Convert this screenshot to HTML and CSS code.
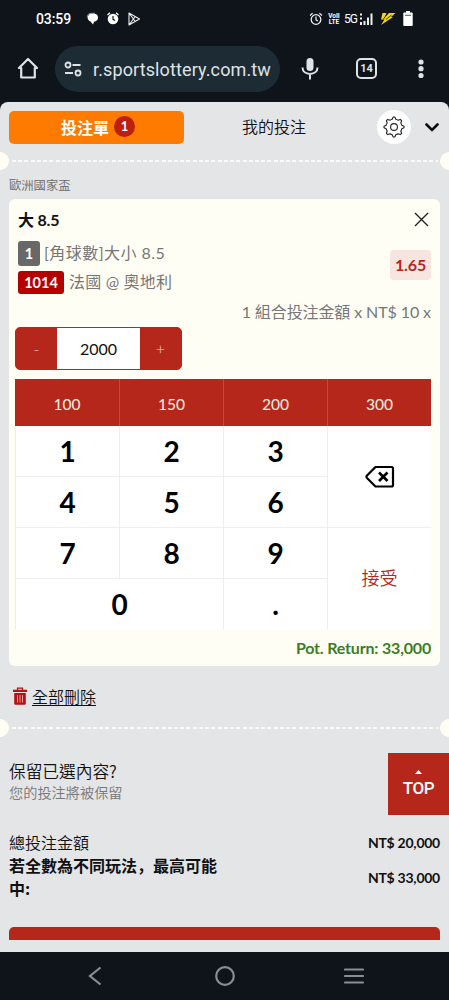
FILE: index.html
```html
<!DOCTYPE html>
<html lang="zh-Hant">
<head>
<meta charset="utf-8">
<title>投注單</title>
<link rel="stylesheet" href="styles.css">
</head>
<body>
<div class="screen">
  <header class="chrome">
    <div class="status">
      <span class="clock">03:59</span>
      <svg class="ic-left" width="56" height="16" viewBox="0 0 56 16">
        <path d="M3 3.500C5 2 10 2 11.500 4.500C13 7.500 11 10.500 8 10.800L7 13.500L4.500 10.500C2.500 10 1.500 8 1.500 6Z" fill="#fff"/>
        <path d="M1.300 6C1 3.500 3 2.300 6 2.300H9" stroke="#999" fill="none"/>
        <circle cx="27" cy="8" r="5.300" fill="#fff"/><path d="M21.500 4L24 1.800M32.500 4L30 1.800" stroke="#fff" stroke-width="1.300"/><path d="M27 5V8.300L29 9.500" stroke="#10151c" stroke-width="1.200" fill="none"/>
        <path d="M43 2V14L53.500 8ZM43 2L49 10.300M43 14L49 5.700" fill="none" stroke="#eee" stroke-width="1.100" stroke-linejoin="round"/>
      </svg>
      <span class="grow"></span>
      <svg class="ic-alarm" width="14" height="14" viewBox="0 0 14 14"><circle cx="7" cy="7.500" r="4.800" fill="none" stroke="#eee" stroke-width="1.300"/><path d="M1 3.500L3.600 1.300M13 3.500L10.400 1.300M7 4.500V7.800L9 9" fill="none" stroke="#eee" stroke-width="1.200"/></svg>
      <span class="volte"><span>VoII</span><span>LTE</span></span>
      <span class="fiveg">5G</span>
      <svg class="ic-signal" width="15" height="14" viewBox="0 0 15 14" fill="#eee"><path d="M1 1.500h2v2H1zM1 5.500h2v2H1zM1 10h2v3H1zM4.500 9h2v4h-2zM8 5.500h2V13H8zM11.500 1.500h2V13h-2z"/></svg>
      <svg class="ic-bolt" width="16" height="14" viewBox="0 0 16 14"><path d="M2.500 1H6.500L4.500 5.500L9 1H15.500L11 5H13L1 13L4.500 7.500H1Z" fill="#f3d51c"/><path d="M7.500 1.500L3.500 7M11.500 3L6 7.500" stroke="#10151c" stroke-width=".8"/></svg>
      <svg class="ic-batt" width="10" height="15" viewBox="0 0 10 15"><path d="M3 0H7V1.500H9Q9.700 1.500 9.700 2.300V14Q9.700 15 9 15H1Q.3 15 .3 14V2.300Q.3 1.500 1 1.500H3Z" fill="#fff"/><path d="M2 4.300H8" stroke="#555" stroke-width="1"/></svg>
    </div>
    <div class="toolbar">
      <svg class="ic-home" width="22" height="23" viewBox="0 0 22 23"><path d="M11 2L2 11H4.200V20.500H17.800V11H20Z" fill="none" stroke="#dfe3e6" stroke-width="2.200" stroke-linejoin="round"/></svg>
      <div class="url">
        <svg width="18" height="16" viewBox="0 0 18 16" fill="none" stroke="#dfe3e6" stroke-width="1.800"><circle cx="4" cy="4" r="2.500"/><path d="M8.500 4H16.500M1 12H9"/><circle cx="14" cy="12" r="2.500"/></svg>
        <span>r.sportslottery.com.tw</span>
      </div>
      <svg class="ic-mic" width="18" height="24" viewBox="0 0 18 24"><rect x="5.500" y="1" width="7" height="13" rx="3.500" fill="#dfe3e6"/><path d="M1.500 10.500C1.500 19 16.500 19 16.500 10.500M9 17V22.500" fill="none" stroke="#dfe3e6" stroke-width="2"/></svg>
      <div class="tabcount">14</div>
      <svg class="ic-more" width="6" height="20" viewBox="0 0 6 20" fill="#dfe3e6"><circle cx="3" cy="3" r="2.600"/><circle cx="3" cy="9.700" r="2.600"/><circle cx="3" cy="16.500" r="2.600"/></svg>
    </div>
  </header>

  <main class="page">
    <div class="tabs">
      <div class="tab-on">投注單<span class="count">1</span></div>
      <div class="tab">我的投注</div>
      <div class="gear">
        <svg width="22" height="22" viewBox="0 0 22 22" fill="none" stroke="#222" stroke-width="1.100" stroke-linejoin="round"><path d="M9.200 3.200L10.200 1H11.800L12.800 3.200Q14 3.500 15 4.200L17.300 3.400L18.600 4.700L17.800 7Q18.500 8 18.800 9.200L21 10.200V11.800L18.800 12.800Q18.500 14 17.800 15L18.600 17.300L17.300 18.600L15 17.800Q14 18.500 12.800 18.800L11.800 21H10.200L9.200 18.800Q8 18.500 7 17.800L4.700 18.600L3.400 17.300L4.200 15Q3.500 14 3.200 12.800L1 11.800V10.200L3.200 9.200Q3.500 8 4.200 7L3.400 4.700L4.700 3.400L7 4.200Q8 3.500 9.200 3.200Z"/><circle cx="11" cy="11" r="3.400"/></svg>
      </div>
      <svg class="chev" width="14" height="9" viewBox="0 0 14 9"><path d="M1.500 1.500L7 7L12.500 1.500" fill="none" stroke="#111" stroke-width="2.600" stroke-linecap="round"/></svg>
    </div>
    <div class="tear"></div>
    <div class="league">歐洲國家盃</div>

    <section class="card">
      <div class="card-head">
        <span>大 8.5</span>
        <svg width="15" height="15" viewBox="0 0 15 15"><path d="M1 1L14 14M14 1L1 14" stroke="#222" stroke-width="1.400"/></svg>
      </div>
      <div class="info">
        <div class="lines">
          <div class="line"><span class="chip gray">1</span><span class="market">[角球數]大小 8.5</span></div>
          <div class="line"><span class="chip red">1014</span><span class="match">法國 @ 奧地利</span></div>
        </div>
        <span class="odds">1.65</span>
      </div>
      <div class="combo">1 組合投注金額 x NT$ 10 x</div>
      <div class="stepper"><span class="step">-</span><span class="amount">2000</span><span class="step">+</span></div>
      <div class="quick"><span>100</span><span>150</span><span>200</span><span>300</span></div>
      <div class="keys">
        <span>1</span><span>2</span><span>3</span>
        <span class="back"><svg width="30" height="24" viewBox="0 0 30 24"><path d="M10.500 2H26.500Q28 2 28 3.500V20Q28 21.500 26.500 21.500H10.500L2 13Q1 11.800 2 10.500Z" fill="none" stroke="#000" stroke-width="2.200" stroke-linejoin="round"/><path d="M14 7.500L22.500 16M22.500 7.500L14 16" stroke="#000" stroke-width="2.600"/></svg></span>
        <span>4</span><span>5</span><span>6</span>
        <span>7</span><span>8</span><span>9</span>
        <span class="accept">接受</span>
        <span class="zero">0</span><span>.</span>
      </div>
      <div class="return">Pot. Return: 33,000</div>
    </section>

    <div class="clear">
      <svg width="14" height="18" viewBox="0 0 14 18"><path d="M4.500 3V1.200H9.500V3" fill="none" stroke="#a51616" stroke-width="1.200"/><path d="M0 2.800H14V5H0ZM1.200 6H12.800V16.500Q12.800 17.700 11.500 17.700H2.500Q1.200 17.700 1.200 16.500Z" fill="#b51212"/><path d="M4.500 8V15.500M7 8V15.500M9.500 8V15.500" stroke="#e5a5a4" stroke-width="1"/></svg>
      <a>全部刪除</a>
    </div>
    <div class="tear"></div>

    <div class="keep">
      <div><div class="keep-q">保留已選內容?</div><div class="keep-a">您的投注將被保留</div></div>
      <div class="top"><svg width="7" height="4" viewBox="0 0 7 4"><path d="M0 4L3.500 0L7 4Z" fill="#fff"/></svg>TOP</div>
    </div>
    <div class="totals">
      <div class="labels"><div class="thin">總投注金額</div><div class="maximum" lang="zh-Hans">若全數為不同玩法，最高可能中:</div></div>
      <div class="sums"><span>NT$ 20,000</span><span>NT$ 33,000</span></div>
    </div>
    <div class="submit"></div>
  </main>

  <nav class="nav">
    <svg width="14" height="20" viewBox="0 0 14 20"><path d="M12.500 1.500L2 10L12.500 18.500" fill="none" stroke="#8a8d91" stroke-width="2.200"/></svg>
    <svg width="20" height="20" viewBox="0 0 20 20"><circle cx="10" cy="10" r="8.800" fill="none" stroke="#8a8d91" stroke-width="2.200"/></svg>
    <svg width="20" height="16" viewBox="0 0 20 16"><path d="M1 1.500H19M1 8H19M1 14.500H19" stroke="#8a8d91" stroke-width="2.200" stroke-linecap="round"/></svg>
  </nav>
</div>
</body>
</html>
```
FILE: styles.css
```css
* { box-sizing: border-box; }
body {
  margin: 0;
  background: #0f141b;
  font-family: Lato, "Noto Sans CJK TC", sans-serif;
  color: #111;
}
svg { display: block; flex: none; }
.screen { width: 449px; height: 1000px; display: flex; flex-direction: column; overflow: hidden; }

/* browser chrome */
.chrome { height: 102px; background: #0f141b; font-family: Roboto, sans-serif; flex: none; }
.status { height: 37px; display: flex; align-items: center; padding: 0 36px; color: #fff; }
.clock { font-size: 14px; font-weight: 500; width: 35px; letter-spacing: -.1px; }
.ic-left { margin-left: 15px; }
.grow { flex: 1; }
.ic-alarm { margin-right: 5px; }
.volte { display: flex; flex-direction: column; font-size: 6.500px; line-height: 6px; font-weight: 700; width: 12px; text-align: center; }
.fiveg { font-size: 12px; width: 14px; margin: 0 1px 0 4px; letter-spacing: -1px; }
.ic-bolt { margin-left: 6px; }
.ic-batt { margin-left: 7px; }
.toolbar { height: 63px; display: flex; align-items: center; padding-left: 17px; }
.url {
  width: 225px; height: 46px; margin-left: 16px; border-radius: 23px; background: #1d2b34;
  display: flex; align-items: center; padding-left: 9px; gap: 11px;
  color: #dfe3e6; font-size: 18px; letter-spacing: .12px; white-space: nowrap;
}
.url span { padding-top: 2px; }
.ic-mic { margin-left: 21px; }
.tabcount {
  width: 21px; height: 21px; margin-left: 37px; border: 2px solid #dfe3e6; border-radius: 5px;
  color: #dfe3e6; font-size: 11px; font-weight: 700; line-height: 17px; text-align: center;
}
.ic-more { margin-left: 41px; }

/* bet slip */
.page { height: 850px; flex: none; background: #e4e5e7; border-radius: 8px 8px 0 0; }
.tabs { height: 50px; display: flex; align-items: center; padding: 0 9px; font-size: 16px; }
.tab-on {
  width: 175px; height: 33px; padding: 0 0 1px 3px; border-radius: 5px; background: #ff7b00; color: #fff;
  display: flex; align-items: center; justify-content: center; gap: 5px; font-weight: 700;
}
.count { width: 21px; height: 21px; border-radius: 50%; background: #bd1f10; font-size: 13px; line-height: 21px; text-align: center; }
.tab { width: 180px; padding-bottom: 2px; text-align: center; }
.gear { width: 34px; height: 34px; margin-left: 13px; border-radius: 50%; background: #fff; display: flex; align-items: center; justify-content: center; }
.chev { margin-left: 14px; }
.tear {
  height: 18px;
  background:
    radial-gradient(circle at 0 9px, #fffef4 8.500px, transparent 9.200px),
    radial-gradient(circle at 100% 9px, #fffef4 8.500px, transparent 9.200px),
    repeating-linear-gradient(90deg, #fafaf8 0 4px, transparent 4px 6.230px) 12px 8px / 426px 2px no-repeat;
}
.league { height: 29px; padding: 3px 0 0 9px; font-size: 12.300px; line-height: 26px; color: #666; }
.card { width: 431px; height: 467px; margin: 0 9px; padding: 0 9px 0 6px; border-radius: 6px; background: #fffef4; }
.card-head { height: 41px; display: flex; align-items: center; justify-content: space-between; padding: 0 2px 0 3px; font-size: 16px; font-weight: 700; letter-spacing: -.2px; }
.card-head span { padding-bottom: 2px; }
.info { height: 56px; display: flex; justify-content: space-between; padding: 0 0 0 3px; }
.line { height: 27px; display: flex; align-items: center; gap: 4px; font-size: 16px; color: #777; }
.line + .line { margin-top: 2px; gap: 5px; }
.chip { border-radius: 3px; color: #fff; font-size: 14.500px; font-weight: 700; text-align: center; }
.gray { width: 22px; height: 25px; line-height: 26px; background: #686868; }
.red { width: 46px; height: 23px; line-height: 23px; background: #b50000; }
.market { letter-spacing: .45px; padding-bottom: 3px; }
.match { letter-spacing: .2px; padding-bottom: 3px; }
.market, .match, .combo { font-weight: 400; }
.odds { width: 41px; height: 30px; margin-top: 10px; border-radius: 4px; background: #f7e6df; color: #b22821; font-size: 16px; font-weight: 700; letter-spacing: -.1px; line-height: 29px; text-align: center; }
.combo { height: 31px; line-height: 31px; font-size: 16px; color: #777; letter-spacing: -.1px; text-align: right; white-space: nowrap; }
.stepper { width: 167px; height: 43px; display: flex; border: 1px solid #b5281c; border-radius: 5px; background: #b5271b; overflow: hidden; line-height: 42px; text-align: center; }
.step { width: 41px; color: #f2d2c8; font-size: 16px; font-weight: 300; }
.amount { flex: 1; background: #fff; font-size: 16px; }
.quick { height: 47px; margin-top: 9px; display: grid; grid-template: 47px / repeat(4, 104px); background: #b5271b; color: #fff0e0; font-size: 15.500px; line-height: 51px; text-align: center; overflow: hidden; }
.quick span + span { border-left: 1px solid #c94a3d; }
.keys { height: 204px; display: grid; grid-template: repeat(4, 51px) / repeat(4, 104px); background: #fff; font-size: 28px; font-weight: 700; line-height: 51px; text-align: center; color: #000; }
.keys span { border-bottom: 1px solid #eeeeec; border-left: 1px solid #eeeeec; }
.keys .back { grid-area: 1 / 4 / 3 / 5; padding-left: 1px; display: flex; align-items: center; justify-content: center; }
.keys .accept { grid-area: 3 / 4 / 5 / 5; border-bottom: 0; line-height: 100px; font-size: 18px; font-weight: 350; color: #b5281f; }
.keys .zero { grid-area: 4 / 1 / 5 / 3; }
.keys .zero, .keys .zero + span { border-bottom: 0; }
.return { height: 36px; line-height: 36px; font-size: 16px; font-weight: 700; color: #3c7d26; letter-spacing: -.18px; text-align: right; }
.clear { height: 53px; display: flex; align-items: center; padding: 7px 0 0 13px; gap: 5px; font-size: 16px; }
.clear a { text-decoration: underline; text-underline-offset: 2px; }
.clear a, .thin, .tab, .league, .keep-a { font-weight: 350; }

/* summary */
.keep { height: 94px; display: flex; justify-content: space-between; padding: 16px 0 0 9px; }
.keep-q { margin-top: 6px; font: 350 16.700px/24px "Noto Sans CJK TC", sans-serif; }
.keep-a { margin-top: 1px; font-size: 14.200px; line-height: 18px; color: #777; }
.top { width: 61px; height: 62px; background: #b5271b; color: #fff; display: flex; flex-direction: column; align-items: center; padding-top: 17px; font: 500 17px/28px Roboto, sans-serif; letter-spacing: -.4px; }
.totals { height: 96px; display: flex; justify-content: space-between; padding: 0 9px; font-size: 16px; line-height: 23px; }
.labels { width: 212px; }
.maximum { font-family: "Noto Sans CJK SC", sans-serif; font-weight: 700; }
.sums { display: flex; flex-direction: column; gap: 12px; font-size: 14px; font-weight: 700; letter-spacing: -.25px; text-align: right; white-space: nowrap; }
.submit { height: 13px; margin: 0 9px; border-radius: 5px 5px 0 0; background: #b5271b; }

.nav { height: 48px; flex: none; display: flex; align-items: center; padding-left: 88px; background: #0f141b; }
.nav svg + svg { margin-left: 113px; }
.nav svg:last-child { margin-left: 109px; }
```
